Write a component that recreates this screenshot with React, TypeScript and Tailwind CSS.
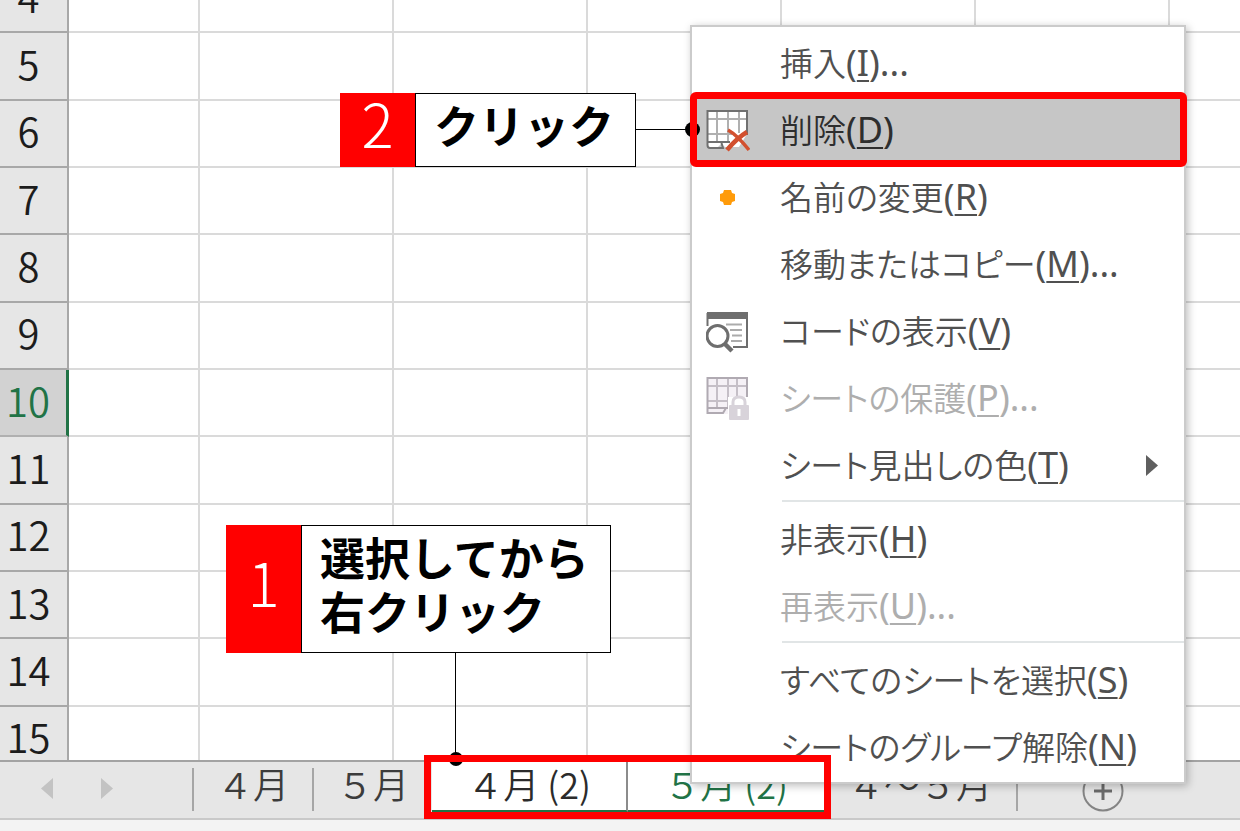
import React, { useState } from "react";

interface MenuEntry {
  label: string;
  accessKey: string;
  suffix?: string;
  icon?: React.ReactNode;
  disabled?: boolean;
  submenu?: boolean;
  dividerAfter?: boolean;
}

const DeleteSheetIcon = () => (
  <svg width="44" height="44" viewBox="0 0 44 44" fill="none">
    <path d="M1.5 2.5H41V25L33 38H19L15 35L12 38H2.5Q1.5 38 1.5 37Z" fill="#fff" />
    <path d="M11 3V32M22 3V32M33 3V24M2 10H41M2 25H26" stroke="#b0b0b0" strokeWidth="2" />
    <path d="M41 26V2H1.500V36Q1.500 39 4 39H17L15.500 34M2 33H24" stroke="#707070" strokeWidth="2" />
    <path d="M22 21Q31 26 43 41" stroke="#d2502f" strokeWidth="3.500" />
    <path d="M41 23Q31 29 21 41" stroke="#d2502f" strokeWidth="4.500" />
  </svg>
);

const CodeIcon = () => (
  <svg width="44" height="44" viewBox="0 0 44 44" fill="none">
    <path d="M1.500 16V4H41V37H27" stroke="#6e6e6e" strokeWidth="2" />
    <path d="M1 2H42V9H1Z" fill="#6e6e6e" />
    <path d="M20 14.500H36M24 20H36M26 25.500H36M25 31H36" stroke="#ababab" strokeWidth="2" />
    <circle cx="11.500" cy="26" r="10.500" fill="#fff" stroke="#6e6e6e" strokeWidth="3" />
    <path d="M18.500 33.500L26 41" stroke="#6e6e6e" strokeWidth="4.500" />
  </svg>
);

const ProtectIcon = () => (
  <svg width="44" height="44" viewBox="0 0 44 44" fill="none">
    <path d="M1.500 1H41V37H2Z" fill="#f5f1f6" />
    <path d="M11 1V31M22 1V31M31 1V20M2 9H41M2 24H25" stroke="#c5bfc7" strokeWidth="2" />
    <path d="M41 20V1H1.500V36H17L20 31M2 31H23" stroke="#b0aab2" strokeWidth="2" />
    <path d="M22 20H44V44H22Z" fill="#fff" />
    <path d="M27 29V25Q27 20 33 20Q39 20 39 25V29" stroke="#d8d3da" strokeWidth="3" />
    <rect x="23" y="28" width="20" height="15" rx="1" fill="#d8d3da" />
    <path d="M33 32V39" stroke="#fff" strokeWidth="3" />
  </svg>
);

const RenameIcon = () => (
  <svg width="44" height="44" viewBox="0 0 44 44" fill="#ff9b0a">
    <path d="M18 14H25L26 17L29 18V25L26 26L25 29H18L17 26L14 25V18L17 17Z" />
  </svg>
);

const MENU: MenuEntry[] = [
  { label: "挿入", accessKey: "I", suffix: "..." },
  { label: "削除", accessKey: "D", icon: <DeleteSheetIcon /> },
  { label: "名前の変更", accessKey: "R", icon: <RenameIcon /> },
  { label: "移動またはコピー", accessKey: "M", suffix: "..." },
  { label: "コードの表示", accessKey: "V", icon: <CodeIcon /> },
  { label: "シートの保護", accessKey: "P", suffix: "...", icon: <ProtectIcon />, disabled: true },
  { label: "シート見出しの色", accessKey: "T", submenu: true, dividerAfter: true },
  { label: "非表示", accessKey: "H" },
  { label: "再表示", accessKey: "U", suffix: "...", disabled: true, dividerAfter: true },
  { label: "すべてのシートを選択", accessKey: "S" },
  { label: "シートのグループ解除", accessKey: "N" },
];

const ROWS = [4, 5, 6, 7, 8, 9, 10, 11, 12, 13, 14, 15];
const CELLS = [0, 1, 2, 3, 4, 5, 6];

// month numbers are full-width digits
const TABS = ["\uFF14月", "\uFF15月"];
const GROUPED_TABS = ["\uFF14月 (2)", "\uFF15月 (2)"];
const TOTAL_TAB = "\uFF14\uFF5E\uFF15月";

const Sheet = () => (
  <div className="min-h-0 flex-1 overflow-hidden bg-white">
    <table className="-mt-[34px] h-[808px] w-full table-fixed border-separate border-spacing-0">
      <colgroup>
        <col className="w-[69px]" />
        <col className="w-[131px]" />
        <col className="w-[194px]" />
        <col className="w-[194px]" />
        <col className="w-[194px]" />
        <col className="w-[194px]" />
        <col className="w-[194px]" />
        <col />
      </colgroup>
      <tbody>
        {ROWS.map((row) => (
          <tr key={row}>
            <th
              scope="row"
              className={
                row === 10
                  ? "border-r-3 border-b-2 border-r-[#217346] border-b-[#b0b0b0] bg-[#d2d2d2] p-0 pr-2.5 pb-1.5 text-[40px] leading-[58px] font-[350] text-[#217346]"
                  : "border-r-2 border-b-2 border-[#a8a8a8] bg-[#e6e6e6] p-0 pr-2.5 pb-1.5 text-[40px] leading-[58px] font-[350] text-[#1c1c1c]"
              }
            >
              {row}
            </th>
            {CELLS.map((cell) => (
              <td key={cell} className="border-r-2 border-b-2 border-[#dadada] p-0 last:border-r-0" />
            ))}
          </tr>
        ))}
      </tbody>
    </table>
  </div>
);

interface TabBarProps {
  selected: string;
  onSelect: (name: string) => void;
}

const TabBar: React.FC<TabBarProps> = ({ selected, onSelect }) => (
  <div className="flex h-[60px] shrink-0 items-start border-t-2 border-b-2 border-t-[#a3a3a3] border-b-[#c9c9c9] bg-[#e6e6e6] text-[36px] leading-[42px] font-[350] text-[#3c3c3c]">
    <div className="flex w-[192px] shrink-0 gap-12 pt-4 pl-[41px]">
      <button type="button" aria-label="前のシート">
        <svg width="12" height="22" viewBox="0 0 12 22" fill="#c3c3c3">
          <path d="M12 0V21L0 10.500Z" />
        </svg>
      </button>
      <button type="button" aria-label="次のシート">
        <svg width="12" height="22" viewBox="0 0 12 22" fill="#c3c3c3">
          <path d="M0 0V21L12 10.500Z" />
        </svg>
      </button>
    </div>
    {TABS.map((name) => (
      <button
        key={name}
        type="button"
        onClick={() => onSelect(name)}
        className="mt-1.5 flex h-[43px] w-[120px] shrink-0 items-start justify-center border-l-2 border-[#a6a6a6]"
      >
        <span className="-mt-1.5">{name}</span>
      </button>
    ))}
    {GROUPED_TABS.map((name) => (
      <button
        key={name}
        type="button"
        onClick={() => onSelect(name)}
        className={
          selected === name
            ? "flex h-[50px] w-[196px] shrink-0 items-start justify-center border-r-2 border-b-2 border-r-[#8c8c8c] border-b-[#217346] bg-white text-[#2b2b2b]"
            : "flex h-[50px] w-[196px] shrink-0 items-start justify-center border-b-2 border-[#217346] bg-white text-[#217346]"
        }
      >
        {name}
      </button>
    ))}
    <button
      type="button"
      onClick={() => onSelect(TOTAL_TAB)}
      className="mt-1.5 flex h-[43px] w-[194px] shrink-0 items-start justify-center border-r-2 border-[#a6a6a6]"
    >
      <span className="-mt-1.5">{TOTAL_TAB}</span>
    </button>
    <button type="button" aria-label="新しいシート" className="ml-16 pt-2">
      <svg width="42" height="42" viewBox="0 0 42 42" fill="none">
        <circle cx="21" cy="21" r="19.500" stroke="#848484" strokeWidth="2" />
        <path d="M21 12V30M12 21H30" stroke="#6a6a6a" strokeWidth="3" />
      </svg>
    </button>
  </div>
);

const ContextMenu = () => (
  <div
    role="menu"
    className="absolute top-[25px] left-[690px] w-[496px] border-2 border-[#cbcbcb] bg-white pt-1 font-['Noto_Sans','Noto_Sans_CJK_JP',sans-serif] shadow-[2px_2px_8px_rgba(0,0,0,0.25)] [font-feature-settings:'palt']"
  >
    {MENU.map((item) => (
      <React.Fragment key={item.accessKey}>
        <button
          type="button"
          role="menuitem"
          disabled={item.disabled}
          className={
            item.accessKey === "D"
              ? "flex h-[67px] w-full items-center bg-[#c6c6c6] pb-0.5 pl-3.5 text-[33px] leading-[48px] font-[350] text-[#2e2e2e]"
              : "flex h-[67px] w-full items-center pb-0.5 pl-3.5 text-[33px] leading-[48px] font-[350] text-[#505050] disabled:text-[#aeaeae]"
          }
        >
          <span className="mr-[30px] w-11 shrink-0">{item.icon}</span>
          <span className="whitespace-nowrap">
            {item.label}
            <span className="text-[36px] font-normal">
              (<span className="underline decoration-2 underline-offset-4">{item.accessKey}</span>){item.suffix}
            </span>
          </span>
          {item.submenu && (
            <svg className="mr-6 ml-auto" width="14" height="22" viewBox="0 0 14 22" fill="#5f5f5f">
              <path d="M0 0V21L12 10.500Z" />
            </svg>
          )}
        </button>
        {item.dividerAfter && <div role="separator" className="mb-[5px] ml-[90px] h-0.5 bg-[#e1e5e6]" />}
      </React.Fragment>
    ))}
  </div>
);

const App: React.FC = () => {
  const [selected, setSelected] = useState(GROUPED_TABS[0]);

  return (
    <div
      lang="ja"
      className="relative flex h-screen flex-col overflow-hidden bg-[#f3f3f3] font-['Noto_Sans_CJK_JP',sans-serif]"
    >
      <Sheet />
      <TabBar selected={selected} onSelect={setSelected} />
      <div className="h-[11px] shrink-0" />

      <ContextMenu />

      {/* step 1 */}
      <div className="absolute top-[525px] left-[226px] flex">
        <div className="flex w-[75px] items-center justify-center bg-[#ff0000] pb-4 text-[60px] leading-[58px] font-light text-white">
          1
        </div>
        <div className="w-[310px] border border-black bg-white pt-1 pb-3.5 pl-[18px] text-[45px] leading-[54px] font-bold whitespace-nowrap text-black">
          選択してから
          <br />
          右クリック
        </div>
      </div>
      <div className="absolute top-[653px] left-[455px] h-[106px] w-px bg-black" />
      <div className="absolute top-[752px] left-[449px] size-3.5 rounded-full bg-black" />
      <div className="absolute top-[755px] left-[424px] h-[64px] w-[407px] border-7 border-[#ff0000]" />

      {/* step 2 */}
      <div className="absolute top-[93px] left-[340px] flex">
        <div className="flex w-[75px] items-center justify-center bg-[#ff0000] pb-4 text-[60px] leading-[58px] font-light text-white">
          2
        </div>
        <div className="w-[221px] border border-black bg-white pt-1 pb-3.5 pl-[18px] text-[45px] leading-[54px] font-bold whitespace-nowrap text-black">
          クリック
        </div>
      </div>
      <div className="absolute top-[129px] left-[636px] h-px w-[56px] bg-black" />
      <div className="absolute top-[122px] left-[685px] size-[15px] rounded-full bg-black" />
      <div className="absolute top-[92px] left-[690px] h-[75px] w-[497px] rounded-md border-7 border-[#ff0000]" />
    </div>
  );
};

export default App;
